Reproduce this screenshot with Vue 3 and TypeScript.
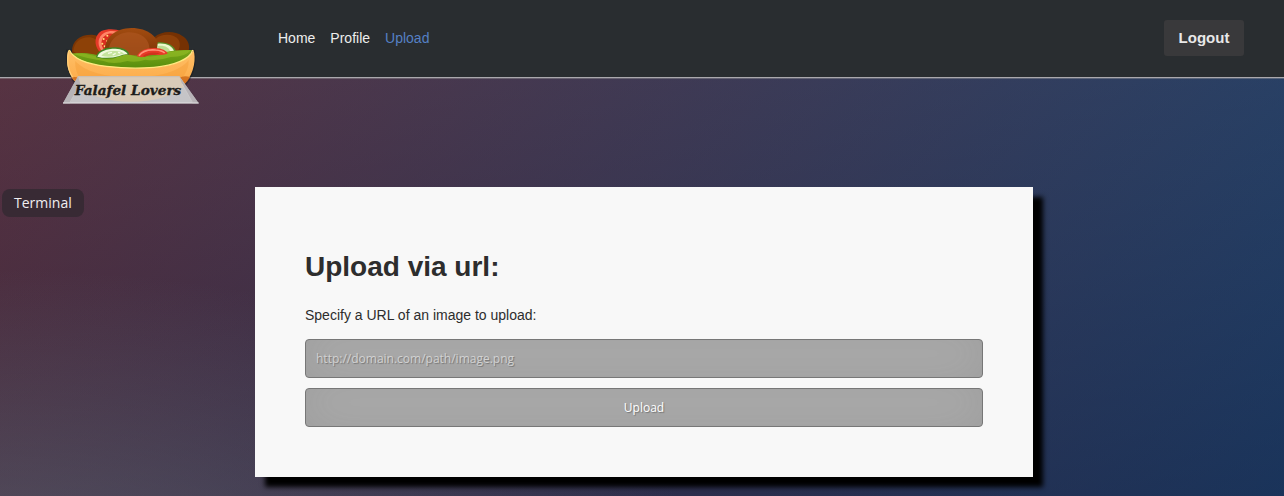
<script setup lang="ts">
import { ref } from 'vue'

interface NavLink {
  label: string
  href: string
  active: boolean
}

const links: NavLink[] = [
  { label: 'Home', href: '#home', active: false },
  { label: 'Profile', href: '#profile', active: false },
  { label: 'Upload', href: '#upload', active: true },
]

const imageUrl = ref('')
</script>

<template>
  <div class="page">
    <header class="bar">
      <a class="logo" href="#home" aria-label="Falafel Lovers">
        <svg viewBox="39 33 411 240" width="137" height="80">
          <defs>
            <linearGradient id="bread" x1="0" y1="0" x2="0" y2="1">
              <stop offset="0" stop-color="#ffc068" />
              <stop offset="0.5" stop-color="#fdb050" />
              <stop offset="1" stop-color="#ec8420" />
            </linearGradient>
            <linearGradient id="ball" x1="0" y1="0" x2="0" y2="1">
              <stop offset="0" stop-color="#a24c10" />
              <stop offset="1" stop-color="#7a3206" />
            </linearGradient>
            <linearGradient id="leaf" x1="0" y1="0" x2="0" y2="1">
              <stop offset="0" stop-color="#7aa81a" />
              <stop offset="1" stop-color="#568c0c" />
            </linearGradient>
          </defs>
          <path d="M48 104C44 150 58 192 82 218Q150 266 242 266Q340 266 402 218C430 188 442 150 435 104Z" fill="#15181a" opacity="0.45" />
          <path d="M66 112C64 76 92 58 126 59C155 60 170 80 168 125L80 125Z" fill="#7b3504" />
          <path d="M70 108C72 80 94 65 120 67C146 70 154 94 145 122L88 122Z" fill="#934508" opacity="0.75" />
          <path d="M312 68C332 48 372 46 396 62C416 74 420 92 416 108L330 118Z" fill="#753103" />
          <path d="M316 72C336 54 370 56 384 72C392 84 391 98 382 110L325 110Z" fill="#96460c" opacity="0.75" />
          <path d="M148 110C130 88 134 60 154 48C174 39 202 42 212 49L184 112Z" fill="#e63a28" />
          <path d="M153 105C140 86 145 64 162 54C177 46 193 47 204 51L178 108Z" fill="#ff8567" />
          <path d="M160 102C150 84 154 69 168 60C178 54 188 55 194 59L174 105Z" fill="#d92f20" />
          <g fill="#ffdd75">
            <circle cx="161" cy="72" r="3" />
            <circle cx="172" cy="62" r="3" />
            <circle cx="157" cy="86" r="3" />
            <circle cx="170" cy="78" r="2" />
            <circle cx="164" cy="94" r="3" />
          </g>
          <path d="M164 116C161 65 198 40 244 39C294 39 328 66 325 102L306 128L180 130Z" fill="url(#ball)" />
          <path d="M176 110C176 74 205 52 240 52C276 53 302 75 298 110L280 132L194 130Z" fill="#ad5520" opacity="0.7" />
          <path d="M323 82C348 79 374 91 378 110L320 122Z" fill="#59912b" />
          <path d="M323 86C348 83 367 93 372 108L320 117Z" fill="#eef8ce" />
          <path d="M324 93C342 90 356 97 360 108L326 112Z" fill="#bddd91" />
          <path d="M62 116C86 114 105 112 130 118L152 122L200 118L270 122L320 116C350 108 390 104 426 105C416 135 376 152 322 158Q240 168 162 156C110 146 78 136 62 116Z" fill="url(#leaf)" />
          <path d="M66 116Q96 112 138 124Q164 136 190 132Q218 116 240 119Q262 128 290 124Q330 126 352 112Q384 106 422 106Q408 126 362 126Q322 140 286 134Q256 144 232 138Q190 150 160 138Q110 130 66 116Z" fill="#94bc26" opacity="0.6" />
          <path d="M138 127C142 105 168 96 198 97C220 98 236 107 238 119Q226 116 210 124Q174 136 138 127Z" fill="#3f8523" />
          <path d="M142 125C148 108 171 101 196 101C215 102 230 109 233 118Q222 116 208 123Q173 133 142 125Z" fill="#f0fade" />
          <path d="M154 122C164 110 180 107 196 108C209 108 219 112 222 116Q211 117 200 122Q176 128 154 122Z" fill="#c5e49d" />
          <path d="M174 115l12 -3M188 120l9 -5M204 112l7 2" stroke="#f6fce8" stroke-width="4" />
          <path d="M260 124C268 106 290 98 316 99C336 100 350 107 353 116Q335 122 316 119Q288 118 276 127Z" fill="#e93a28" />
          <path d="M267 122C278 107 298 103 317 105C330 106 340 110 344 114" fill="none" stroke="#ff9278" stroke-width="5" />
          <path d="M278 124Q296 108 330 115L316 119Q296 119 284 126Z" fill="#cf331d" />
          <path d="M56 104C47 125 48 172 78 202Q132 259 242 260Q350 259 407 203C433 173 439 127 430 104C421 132 373 152 312 157Q242 163 170 154C102 145 69 127 56 104Z" fill="url(#bread)" />
          <path d="M76 138C105 171 166 186 242 187C324 187 388 171 416 135C418 166 396 195 370 214Q310 247 238 246Q148 244 106 208C82 188 74 160 76 138Z" fill="#f29b35" opacity="0.4" />
          <path d="M58 105C69 130 108 147 170 154Q242 163 312 157C373 152 421 132 428 105" fill="none" stroke="#ffe980" stroke-width="4" />
          <path d="M56 108C50 138 53 176 81 202" fill="none" stroke="#ffcf7a" stroke-width="4" />
          <path d="M64 188Q76 183 88 190L84 208ZM388 188Q402 180 420 186Q414 200 403 208Z" fill="#cc6616" opacity="0.8" />
          <path d="M84 184H388L446 265H39Z" fill="#cdcdcf" opacity="0.94" />
          <path d="M84 184H388L406 212Q350 260 242 260Q134 260 82 210Z" fill="#dccab4" opacity="0.8" />
          <path d="M84 184L39 265H60L91 206ZM388 184L446 265H427L396 206Z" fill="#b4b0b4" opacity="0.85" />
          <path d="M84 185H388" stroke="#bdb9b8" stroke-width="2" />
          <path d="M39 264H446" stroke="#e2e0e2" stroke-width="3" />
          <path d="M91 206L60 262M396 206L427 262" stroke="#e2dfdf" stroke-width="2" opacity="0.7" />
          <text class="logo-text" x="234" y="240" text-anchor="middle">Falafel Lovers</text>
        </svg>
      </a>
      <nav class="nav" aria-label="Main">
        <a
          v-for="link in links"
          :key="link.label"
          :href="link.href"
          :class="['nav-link', { active: link.active }]"
        >{{ link.label }}</a>
      </nav>
      <button class="logout" type="button">Logout</button>
    </header>

    <button class="terminal" type="button">Terminal</button>

    <main class="content">
      <form class="card" @submit.prevent>
        <h1 class="title">Upload via url:</h1>
        <label class="hint" for="image-url">Specify a URL of an image to upload:</label>
        <input
          id="image-url"
          v-model="imageUrl"
          class="field"
          type="text"
          placeholder="http://domain.com/path/image.png"
        />
        <button class="field submit" type="submit">Upload</button>
      </form>
    </main>
  </div>
</template>

<style>
html,
body,
#app {
  height: 100%;
}

body {
  margin: 0;
}
</style>

<style scoped>
.page {
  position: relative;
  box-sizing: border-box;
  min-height: 100%;
  font-family: "Liberation Sans", Arial, sans-serif;
  font-size: 14px;
  line-height: 20px;
  color: #2d2d2d;
  background:
    radial-gradient(ellipse at 0% 100%, rgba(104, 128, 138, 0.4) 10%, rgba(138, 114, 76, 0) 40%),
    linear-gradient(to bottom, rgba(57, 173, 219, 0.25) 0%, rgba(42, 60, 87, 0.4) 100%),
    linear-gradient(135deg, #670d10 0%, #092756 100%);
  background-size: 100% 620px;
}

.bar {
  display: flex;
  align-items: flex-start;
  height: 77px;
  padding: 0 40px 0 63px;
  background: #292d30;
  border-bottom: 1px solid #aaa8ad;
  box-shadow: 0 1px 0 rgba(160, 160, 160, 0.4);
}

.logo {
  flex: none;
  margin-top: 26px;
}

.logo svg {
  display: block;
}

.logo-text {
  font-family: "DejaVu Serif", serif;
  font-size: 41px;
  font-style: italic;
  font-weight: bold;
  fill: #1d1b1a;
  stroke: #1d1b1a;
  stroke-width: 1px;
}

.nav {
  display: flex;
  flex: 1;
  gap: 15px;
  padding: 28px 0 0 78px;
}

.nav-link {
  color: #ededed;
  text-decoration: none;
}

.nav-link.active {
  color: #5580c4;
}

.logout {
  width: 80px;
  height: 36px;
  margin-top: 20px;
  padding: 0;
  border: 0;
  border-radius: 3px;
  background: #39393b;
  color: #e8e8e8;
  font: bold 15px/20px "Liberation Sans", Arial, sans-serif;
}

.terminal {
  position: absolute;
  top: 189px;
  left: 2px;
  height: 28px;
  padding: 0 12px;
  border: 0;
  border-radius: 8px;
  background: #382a34;
  color: #f0eef0;
  font: 14px/20px "Open Sans", sans-serif;
}

.content {
  padding: 109px 0 19px 4px;
}

.card {
  display: flex;
  flex-direction: column;
  box-sizing: border-box;
  max-width: 778px;
  margin: 0 auto;
  padding: 60px 50px 50px;
  background: #f8f8f8;
  box-shadow: 10px 10px 5px #000;
}

.title {
  margin: 0 0 18px;
  font-size: 28px;
  line-height: 40px;
}

.hint {
  margin-bottom: 14px;
}

.field {
  box-sizing: border-box;
  width: 100%;
  height: 39px;
  padding: 0 10px;
  border: 1px solid #777;
  border-radius: 4px;
  outline: none;
  background: #adadad;
  box-shadow: inset 0 -5px 45px rgba(100, 100, 100, 0.2);
  color: #fff;
  font: 12px/18px "Open Sans", sans-serif;
  text-shadow: 1px 1px 1px rgba(0, 0, 0, 0.3);
}

.field::placeholder {
  color: #d2d2d2;
  opacity: 1;
}

.submit {
  margin-top: 10px;
}
</style>
